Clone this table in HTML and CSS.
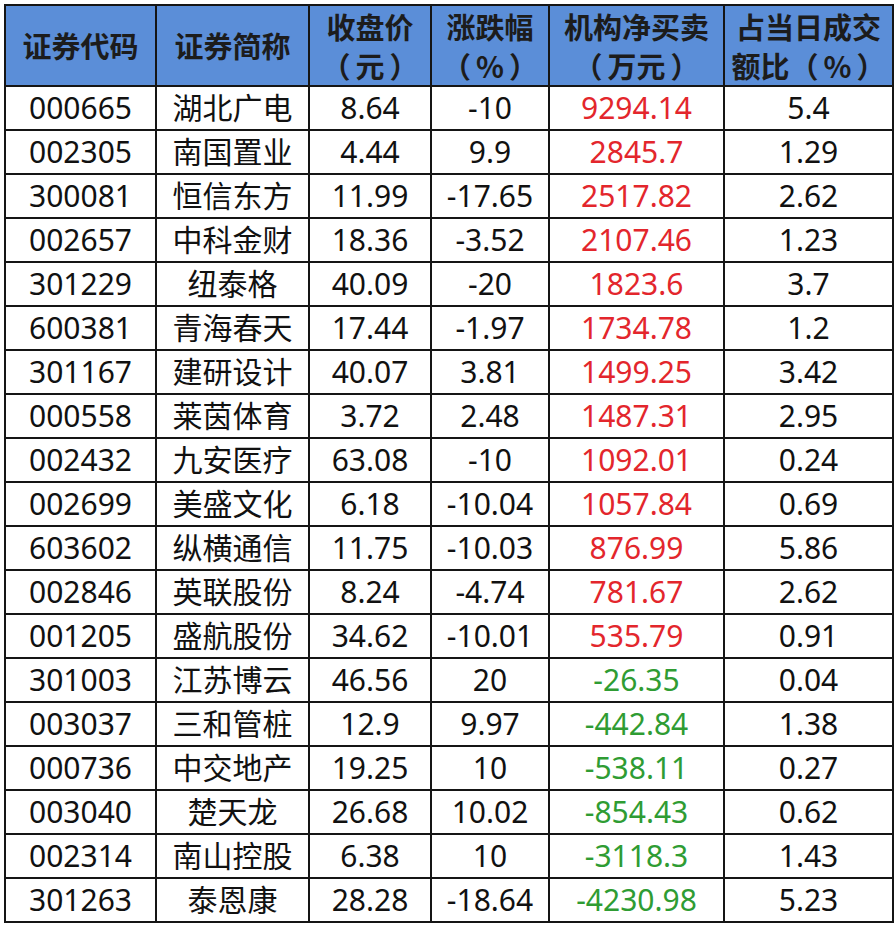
FILE: index.html
```html
<!DOCTYPE html>
<html lang="zh-CN">
<head>
<meta charset="utf-8">
<title>机构净买卖</title>
<link rel="stylesheet" href="styles.css">
</head>
<body>
<table class="grid">
  <colgroup>
    <col class="c1"><col class="c2"><col class="c3"><col class="c4"><col class="c5"><col class="c6">
  </colgroup>
  <thead>
    <tr class="head">
      <th>证券代码</th>
      <th>证券简称</th>
      <th>收盘价<br><span class="lp">（</span>元<span class="rp">）</span></th>
      <th>涨跌幅<br><span class="lp">（</span>%<span class="rp">）</span></th>
      <th>机构净买卖<br><span class="lp">（</span>万元<span class="rp">）</span></th>
      <th>占当日成交<br>额比<span class="lp">（</span>%<span class="rp">）</span></th>
    </tr>
  </thead>
  <tbody>
    <tr><td>000665</td><td>湖北广电</td><td>8.64</td><td>-10</td><td class="up">9294.14</td><td>5.4</td></tr>
    <tr><td>002305</td><td>南国置业</td><td>4.44</td><td>9.9</td><td class="up">2845.7</td><td>1.29</td></tr>
    <tr><td>300081</td><td>恒信东方</td><td>11.99</td><td>-17.65</td><td class="up">2517.82</td><td>2.62</td></tr>
    <tr><td>002657</td><td>中科金财</td><td>18.36</td><td>-3.52</td><td class="up">2107.46</td><td>1.23</td></tr>
    <tr><td>301229</td><td>纽泰格</td><td>40.09</td><td>-20</td><td class="up">1823.6</td><td>3.7</td></tr>
    <tr><td>600381</td><td>青海春天</td><td>17.44</td><td>-1.97</td><td class="up">1734.78</td><td>1.2</td></tr>
    <tr><td>301167</td><td>建研设计</td><td>40.07</td><td>3.81</td><td class="up">1499.25</td><td>3.42</td></tr>
    <tr><td>000558</td><td>莱茵体育</td><td>3.72</td><td>2.48</td><td class="up">1487.31</td><td>2.95</td></tr>
    <tr><td>002432</td><td>九安医疗</td><td>63.08</td><td>-10</td><td class="up">1092.01</td><td>0.24</td></tr>
    <tr><td>002699</td><td>美盛文化</td><td>6.18</td><td>-10.04</td><td class="up">1057.84</td><td>0.69</td></tr>
    <tr><td>603602</td><td>纵横通信</td><td>11.75</td><td>-10.03</td><td class="up">876.99</td><td>5.86</td></tr>
    <tr><td>002846</td><td>英联股份</td><td>8.24</td><td>-4.74</td><td class="up">781.67</td><td>2.62</td></tr>
    <tr><td>001205</td><td>盛航股份</td><td>34.62</td><td>-10.01</td><td class="up">535.79</td><td>0.91</td></tr>
    <tr><td>301003</td><td>江苏博云</td><td>46.56</td><td>20</td><td class="down">-26.35</td><td>0.04</td></tr>
    <tr><td>003037</td><td>三和管桩</td><td>12.9</td><td>9.97</td><td class="down">-442.84</td><td>1.38</td></tr>
    <tr><td>000736</td><td>中交地产</td><td>19.25</td><td>10</td><td class="down">-538.11</td><td>0.27</td></tr>
    <tr><td>003040</td><td>楚天龙</td><td>26.68</td><td>10.02</td><td class="down">-854.43</td><td>0.62</td></tr>
    <tr><td>002314</td><td>南山控股</td><td>6.38</td><td>10</td><td class="down">-3118.3</td><td>1.43</td></tr>
    <tr><td>301263</td><td>泰恩康</td><td>28.28</td><td>-18.64</td><td class="down">-4230.98</td><td>5.23</td></tr>
  </tbody>
</table>
</body>
</html>
```

FILE: styles.css
```css
html, body {
  margin: 0;
  padding: 0;
  background: #ffffff;
}

body {
  padding: 4px 0 0 4px;
  font-family: "Noto Sans", "Noto Sans CJK SC", sans-serif;
  color: #111111;
}

.grid {
  border-collapse: collapse;
  table-layout: fixed;
  width: 888px;
}

.c1 { width: 151px; }
.c2 { width: 153px; }
.c3 { width: 122px; }
.c4 { width: 118px; }
.c5 { width: 175px; }
.c6 { width: 169px; }

.grid th,
.grid td {
  border: 2px solid #151515;
  padding: 0;
  text-align: center;
  vertical-align: middle;
  white-space: nowrap;
  overflow: hidden;
}

.head th {
  height: 79px;
  background: #5b8ed8;
  color: #1c1c1c;
  font-family: "Noto Sans CJK SC", sans-serif;
  font-weight: 700;
  font-size: 29px;
  line-height: 39px;
}

.lp {
  margin-right: 5px;
}

.rp {
  margin-left: 5px;
}

.grid td {
  height: 42px;
  font-size: 30px;
  line-height: 40px;
}

.grid td.up {
  color: #e3262c;
}

.grid td.down {
  color: #2f9c33;
}
```
